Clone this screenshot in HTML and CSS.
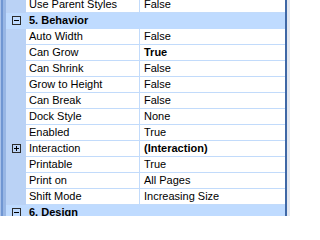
FILE: index.html
```html
<!DOCTYPE html>
<html>
<head>
<meta charset="utf-8">
<link rel="stylesheet" href="styles.css">
</head>
<body>
<div class="grid">
  <div class="edge"></div>
  <div class="rows">
    <div class="row first"><div class="gut"></div><div class="name">Use Parent Styles</div><div class="val">False</div></div>
    <div class="row cat"><div class="gut"><span class="box"><span class="h"></span></span></div><div class="cattext">5. Behavior</div></div>
    <div class="row"><div class="gut"></div><div class="name">Auto Width</div><div class="val">False</div></div>
    <div class="row"><div class="gut"></div><div class="name">Can Grow</div><div class="val b">True</div></div>
    <div class="row"><div class="gut"></div><div class="name">Can Shrink</div><div class="val">False</div></div>
    <div class="row"><div class="gut"></div><div class="name">Grow to Height</div><div class="val">False</div></div>
    <div class="row"><div class="gut"></div><div class="name">Can Break</div><div class="val">False</div></div>
    <div class="row"><div class="gut"></div><div class="name">Dock Style</div><div class="val">None</div></div>
    <div class="row"><div class="gut"></div><div class="name">Enabled</div><div class="val">True</div></div>
    <div class="row"><div class="gut"><span class="box"><span class="h"></span><span class="v"></span></span></div><div class="name">Interaction</div><div class="val b">(Interaction)</div></div>
    <div class="row"><div class="gut"></div><div class="name">Printable</div><div class="val">True</div></div>
    <div class="row"><div class="gut"></div><div class="name">Print on</div><div class="val">All Pages</div></div>
    <div class="row"><div class="gut"></div><div class="name">Shift Mode</div><div class="val">Increasing Size</div></div>
    <div class="row cat"><div class="gut"><span class="box"><span class="h"></span></span></div><div class="cattext">6. Design</div></div>
  </div>
  <div class="redge"></div>
</div>
</body>
</html>
```
FILE: styles.css
```css
html, body {
  margin: 0;
  padding: 0;
  width: 290px;
  height: 216px;
  overflow: hidden;
  background: #ffffff;
}
.grid {
  display: flex;
  width: 290px;
  height: 216px;
  overflow: hidden;
  font-family: "Liberation Sans", Arial, sans-serif;
  font-size: 11px;
  color: #000000;
}
.edge {
  width: 6px;
  flex: none;
  background: linear-gradient(to right, #a9c2ea 0, #a9c2ea 1px, #7096d2 1px, #7096d2 3px, #98b6e4 3px, #98b6e4 6px);
}
.rows {
  flex: none;
  width: 279px;
  display: flex;
  flex-direction: column;
  margin-top: -3px;
}
.row {
  display: flex;
  height: 16px;
  flex: none;
}
.gut {
  width: 20px;
  flex: none;
  height: 16px;
  background: #bad2f5;
  position: relative;
}
.name {
  width: 110px;
  flex: none;
  height: 15px;
  line-height: 15px;
  padding-left: 3px;
  background: #ffffff;
  border-right: 1px solid #c2dbfb;
  border-bottom: 1px solid #c2dbfb;
  white-space: nowrap;
}
.val {
  width: 141px;
  flex: none;
  height: 15px;
  line-height: 15px;
  padding-left: 4px;
  background: #ffffff;
  border-bottom: 1px solid #c2dbfb;
  white-space: nowrap;
}
.b, .cattext {
  font-weight: bold;
}
.cat {
  background: #bfdbff;
}
.cat .gut {
  background: #bfdbff;
}
.cattext {
  flex: 1;
  height: 16px;
  line-height: 15px;
  padding-left: 3px;
  white-space: nowrap;
}
.box {
  position: absolute;
  left: 6px;
  top: 3px;
  width: 7px;
  height: 7px;
  border: 1px solid #2b2b2b;
}
.box .h {
  position: absolute;
  left: 1px;
  top: 3px;
  width: 5px;
  height: 1px;
  background: #000000;
}
.box .v {
  position: absolute;
  left: 3px;
  top: 1px;
  width: 1px;
  height: 5px;
  background: #000000;
}
.redge {
  width: 5px;
  flex: none;
  background: linear-gradient(to right, #3f68a6 0, #3f68a6 2px, #e4e8f0 2px, #e4e8f0 5px);
}
```
